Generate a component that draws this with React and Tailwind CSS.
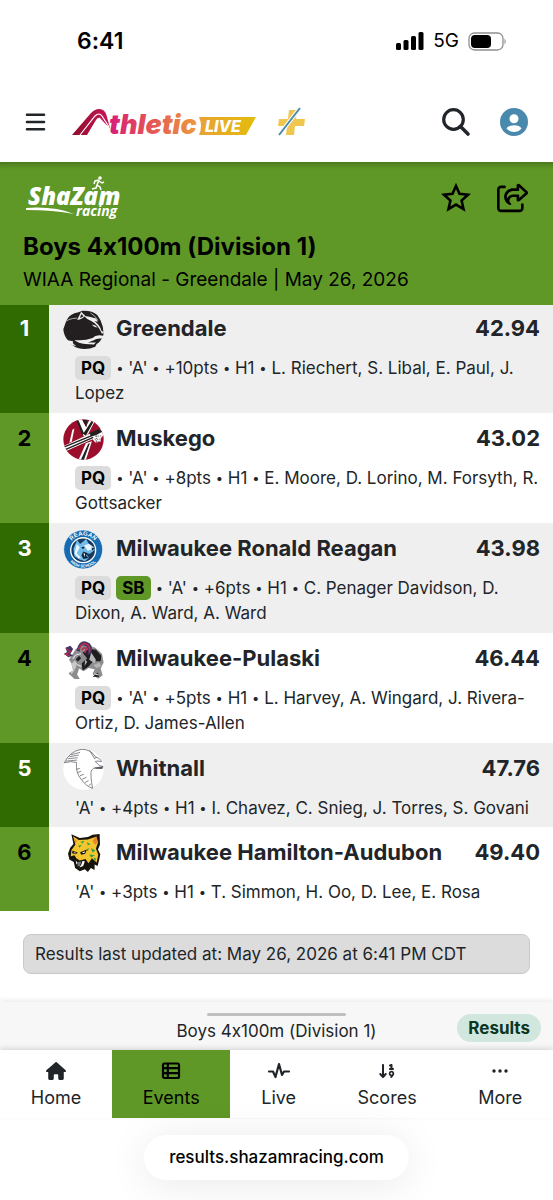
import React from "react";
import { FaArrowDown19, FaHouse, FaRegShareFromSquare } from "react-icons/fa6";

const results = [
  { place: 1, team: "Greendale", time: "42.94", badges: ["PQ"], points: 10, runners: "L. Riechert, S. Libal, E. Paul, J. Lopez" },
  { place: 2, team: "Muskego", time: "43.02", badges: ["PQ"], points: 8, runners: "E. Moore, D. Lorino, M. Forsyth, R. Gottsacker" },
  { place: 3, team: "Milwaukee Ronald Reagan", time: "43.98", badges: ["PQ", "SB"], points: 6, runners: "C. Penager Davidson, D. Dixon, A. Ward, A. Ward" },
  { place: 4, team: "Milwaukee-Pulaski", time: "46.44", badges: ["PQ"], points: 5, runners: "L. Harvey, A. Wingard, J. Rivera-Ortiz, D. James-Allen" },
  { place: 5, team: "Whitnall", time: "47.76", badges: [], points: 4, runners: "I. Chavez, C. Snieg, J. Torres, S. Govani" },
  { place: 6, team: "Milwaukee Hamilton-Audubon", time: "49.40", badges: [], points: 3, runners: "T. Simmon, H. Oo, D. Lee, E. Rosa" },
];

const Panther = () => (
  <svg viewBox="0 0 122 122" className="size-[41px]">
    <path d="M10 34 Q20 14 46 10 L58 5 Q88 4 102 18 L112 34 Q122 56 120 78 Q112 98 100 104 L96 112 Q70 124 44 116 Q28 112 14 92 Q2 78 1 60 Z" fill="#231f20" />
    <path d="M42 33 L54 8 L66 20 Q58 30 42 33 Z" fill="#efefef" />
    <path d="M50 27 L55 15 L61 22 Z" fill="#231f20" />
    <path d="M62 20 Q84 24 98 28 L104 38 L94 36 Q112 52 114 64 L122 70 L116 74 Q104 46 84 36 Q72 32 62 20 Z" fill="#efefef" />
    <path d="M82 12 Q96 20 104 34" fill="none" stroke="#efefef" strokeWidth="2" />
    <path d="M3 42 Q14 28 42 27" fill="none" stroke="#efefef" strokeWidth="2" />
    <path d="M86 46 Q98 47 103 55 Q92 55 86 46 Z" fill="#efefef" />
    <path d="M34 92 Q62 96 88 86 Q98 74 122 80 L116 88 Q100 86 90 94 L74 100 L98 100 L92 106 L66 104 Q46 102 34 92 Z" fill="#efefef" />
    <path d="M10 92 L30 96 Q26 102 40 111 Q20 108 10 92 Z" fill="#efefef" />
  </svg>
);

const Warrior = () => (
  <svg viewBox="0 0 122 122" className="size-[41px]">
    <clipPath id="warrior-clip">
      <circle cx="61" cy="61" r="60" />
    </clipPath>
    <g clipPath="url(#warrior-clip)">
      <rect width="122" height="122" fill="#9b0f2c" />
      <path d="M42 0 L56 0 L68 24 L80 0 L96 4 L74 46 L62 52 Z" fill="#fff" />
      <path d="M58 3 L72 3 L70 24 Z M85 6 L91 8 L68 50 L60 44 Z M40 4 L46 4 L62 42 L57 48 Z" fill="#231f20" />
      <path d="M28 32 L34 28 L26 68 L19 71 Z" fill="#fff" />
      <path d="M68 72 L86 66 L68 122 H46 Z" fill="#fff" />
      <path d="M75 74 L80 72 L62 122 H53 Z" fill="#231f20" />
      <path d="M2 80 L88 40 L118 28 L122 46 L112 58 L112 68 L96 70 L88 60 L8 96 Z" fill="#fff" />
      <path d="M4 83 L91 47 M7 91 L90 55" stroke="#231f20" strokeWidth="4" />
      <path d="M80 42 L108 29 L117 38 L98 48 L82 52 Z" fill="#231f20" />
      <path d="M96 52 L116 50 M94 60 L110 60 M98 67 L110 67 M101 49 L98 68" stroke="#333" strokeWidth="2" strokeDasharray="4 3" />
    </g>
  </svg>
);

const Husky = () => (
  <svg viewBox="0 0 122 122" className="size-[41px]">
    <circle cx="60" cy="61" r="58" fill="#176bb0" stroke="#fff" strokeWidth="2" />
    <circle cx="60" cy="63" r="39" fill="#fff" />
    <circle cx="60" cy="63" r="35" fill="#17395f" />
    <path id="reagan-top" d="M18 48 A45 45 0 0 1 102 48" fill="none" />
    <path id="reagan-bottom" d="M13 86 A53 53 0 0 0 107 86" fill="none" />
    <text fontFamily="Liberation Sans" fontWeight="700" fontSize="18" fill="#fff">
      <textPath href="#reagan-top" startOffset="50%" textAnchor="middle">REAGAN</textPath>
    </text>
    <text fontFamily="Liberation Sans" fontWeight="700" fontSize="12" fill="#fff">
      <textPath href="#reagan-bottom" startOffset="50%" textAnchor="middle">HIGH SCHOOL</textPath>
    </text>
    <path d="M31 59 L42 33 L51 45 L69 30 L76 43 L90 52 L95 62 L81 73 L69 74 L77 86 L65 96 L49 91 L34 81 Z" fill="#71bce8" />
    <path d="M41 45 L50 54 L41 72 L53 85 L47 88 L34 74 Z M62 49 L77 44 L92 58 L74 65 Z" fill="#e9f4fb" />
    <path d="M54 54 L65 53 L60 60 Z M85 55 L94 58 L87 64 Z M60 67 L74 72 L68 79 L76 86 L61 89 L55 79 Z" fill="#10233c" />
    <path d="M61 70 L66 75 L63 83 Z" fill="#fff" />
  </svg>
);

const Ram = () => (
  <svg viewBox="0 0 122 122" className="size-[41px]">
    <path d="M18 62 L38 30 L66 16 L96 26 L116 44 L121 70 L112 88 L118 108 L104 118 L88 104 L94 90 L76 86 L62 96 L48 88 L42 106 L50 119 L34 119 L16 102 L30 94 L26 74 Z" fill="#8d8d8f" />
    <path d="M58 40 L78 30 L98 32 L114 50 L112 66 L90 66 L76 82 L58 94 L56 72 L72 58 Z" fill="#1d1d20" />
    <path d="M84 40 L98 62 L94 72 L78 62 Z M90 78 L108 70 L114 80 L100 86 Z M66 62 L72 68 L64 80 Z" fill="#b5b5b7" />
    <path d="M24 76 L34 64 L42 72 L36 90 L26 104 L22 101 L32 90 Z" fill="#c9c9ca" />
    <path d="M40 34 Q48 2 70 8 Q92 14 84 44 L72 48 Q78 26 66 20 Q50 16 50 38 Z" fill="#443467" />
    <path d="M47 31 Q55 11 68 14 Q82 20 79 40 M56 34 Q61 23 70 28 L65 42" fill="none" stroke="#b62f4c" strokeWidth="5" />
    <path d="M7 26 L22 20 L30 30 L22 45 L31 49 L16 54 L3 44 L12 39 Z" fill="#443467" />
    <path d="M10 29 L22 38 L8 46 L20 50" fill="none" stroke="#b62f4c" strokeWidth="4" />
    <path d="M38 60 L48 50 L54 57 L44 68 Z M18 106 L34 104 M88 112 L104 100 L107 113 Z" fill="#222" />
    <path d="M39 47 L54 44 M42 76 L54 82 M29 59 L38 47 M93 103 L105 107" stroke="#e4e4e4" strokeWidth="3" />
  </svg>
);

const Falcon = () => (
  <svg viewBox="0 0 122 122" className="size-[41px]">
    <circle cx="61" cy="61" r="60" fill="#fff" />
    <g fill="none" stroke="#4e4e58" strokeWidth="2" strokeLinejoin="round">
      <path d="M4 41 Q20 7 54 1 Q83 0 97 24 Q112 28 114 38 Q103 34 96 37 L108 49 L119 52 L117 58 L103 58 Q89 54 84 66 Q81 78 88 117 Q70 112 53 89 Q38 72 40 40 Q23 35 4 41 Z" />
      <path d="M24 17 L51 10 M19 23 L47 18 M14 29 L44 26 M9 36 L42 33 M40 60 L50 58 M44 70 L54 66 M50 80 L62 75 M57 90 L70 84 M66 100 L76 94 M77 109 L83 104 M79 4 L94 29 L100 24" />
    </g>
    <path d="M86 50 L94 55 L119 51 L116 59 L98 59 Z" fill="#5a5a63" />
  </svg>
);

const Wildcat = () => (
  <svg viewBox="0 0 122 122" className="size-[41px]">
    <path d="M25 4 L50 15 L74 12 L88 5 L109 3 L110 35 L104 49 L111 63 L108 78 L103 98 L94 94 L94 110 L83 104 L74 116 L65 108 L50 114 L36 104 L32 86 L19 79 L15 62 L21 45 L31 33 Z" fill="#17130d" />
    <path d="M30 10 L47 21 L74 19 L98 11 L104 29 L98 46 L105 65 L100 88 L86 75 L76 90 L67 77 L50 82 L35 72 L23 69 L25 51 L37 34 Z" fill="#f3c52e" />
    <path d="M99 9 L105 28 L95 35 L88 23 Z M33 15 L41 23 L37 31 Z" fill="#e88729" />
    <path d="M52 26 L64 24 L58 31 Z M72 27 L82 34 L73 36 Z M45 38 L56 35 L49 44 Z M83 45 L96 52 L88 58 Z M78 64 L95 66 L84 73 Z M70 49 L77 45 L74 55 Z M91 74 L98 75 L96 86 Z" fill="#2e9d43" />
    <path d="M28 53 L44 58 L38 63 L27 60 Z M51 57 L71 49 L66 62 L54 65 Z M24 69 L34 66 L39 74 L28 77 Z" fill="#17130d" />
    <path d="M31 57 L39 59 L36 62 Z M56 58 L66 54 L63 60 Z M38 82 L44 89 L40 94 Z M58 83 L65 84 L60 98 L49 103 L55 93 Z" fill="#fff" />
    <path d="M44 86 L55 85 L50 98 L43 100 Z" fill="#777" />
  </svg>
);

const logos = { 1: Panther, 2: Warrior, 3: Husky, 4: Ram, 5: Falcon, 6: Wildcat };

const StatusBar = () => (
  <div className="flex h-[82px] items-center justify-between pl-[77px] pr-[46px] text-black">
    <span className="text-[23px] font-semibold">6:41</span>
    <div className="flex items-center gap-[9px]">
      <svg viewBox="0 0 28 18" className="h-[18px] w-7">
        <rect x="0" y="11" width="5" height="7" rx="1.5" />
        <rect x="7.5" y="8" width="5" height="10" rx="1.5" />
        <rect x="15" y="4" width="5" height="14" rx="1.5" />
        <rect x="22.5" y="0" width="5" height="18" rx="1.5" />
      </svg>
      <span className="text-[19px]">5G</span>
      <svg viewBox="0 0 39 19" className="h-[19px] w-[39px]">
        <rect x="1" y="1" width="34" height="17" rx="5.5" fill="none" stroke="#8e8e8e" strokeWidth="1.3" />
        <rect x="3" y="3" width="20" height="13" rx="4" />
        <path d="M36.5 6.5 Q39 9.5 36.5 12.5 Z" fill="#8e8e8e" />
      </svg>
    </div>
  </div>
);

const AthleticLogo = () => (
  <svg viewBox="0 -5 184 38" className="h-[38px] w-[184px]" role="img" aria-label="AthleticLIVE">
    <defs>
      <linearGradient id="word" gradientUnits="userSpaceOnUse" x1="36" x2="128" y1="0" y2="0">
        <stop offset="0" stopColor="#d81b78" />
        <stop offset="0.5" stopColor="#e35a55" />
        <stop offset="1" stopColor="#ee9f3a" />
      </linearGradient>
      <linearGradient id="flag" x1="0" x2="1" y1="0" y2="0">
        <stop offset="0" stopColor="#e9a233" />
        <stop offset="1" stopColor="#e3bd0c" />
      </linearGradient>
      <linearGradient id="track" x1="0" x2="1" y1="0" y2="0">
        <stop offset="0" stopColor="#8e0e2c" />
        <stop offset="1" stopColor="#cc1559" />
      </linearGradient>
    </defs>
    <path d="M0 27 L19 5 Q25 -1 31 2 Q34 4 35 9 L38 20 Q33 16 28 10 Q26 9 24 12 L15 27 Z" fill="url(#track)" />
    <path d="M8 27 L23 8 Q27 4 30 8 L37 19" fill="none" stroke="#fff" strokeWidth="1.2" />
    <text x="37" y="26" fontFamily="Inter" fontStyle="italic" fontWeight="900" fontSize="27" fill="url(#word)">thletic</text>
    <path d="M127 9 H184 L174 27 H127 Q131 18 127 9 Z" fill="url(#flag)" />
    <text x="133" y="24" fontFamily="Inter" fontStyle="italic" fontWeight="800" fontSize="16" fill="#fff">LIVE</text>
  </svg>
);

const Navbar = () => (
  <header className="flex h-20 items-center pl-[25px] pr-6 text-[#212529]">
    <button aria-label="Menu">
      <svg viewBox="0 0 21 18" className="h-[18px] w-[21px]" stroke="currentColor" strokeWidth="2.6" strokeLinecap="round">
        <path d="M2 1.7 H19 M2 9 H19 M2 16.3 H19" />
      </svg>
    </button>
    <a href="#" className="ml-[26px]">
      <AthleticLogo />
    </a>
    <svg viewBox="0 0 28 30" className="ml-[21px] h-[30px] w-7">
      <path d="M12 3 H20 L19 12 H28 L27 19 H18 L17 28 H9 L10 19 H1 L2 12 H11 Z" fill="#f0c64e" />
      <path d="M2 28 L23 1" stroke="#fff" strokeWidth="4" />
      <path d="M2 28 L23 1" stroke="#4a8aab" strokeWidth="2" />
    </svg>
    <button aria-label="Search" className="ml-auto">
      <svg viewBox="0 0 30 30" className="size-[30px]" fill="none" stroke="currentColor">
        <circle cx="12.5" cy="12.5" r="9.8" strokeWidth="3.2" />
        <path d="M19.5 19.5 L27 27" strokeWidth="3.6" strokeLinecap="round" />
      </svg>
    </button>
    <button aria-label="Account" className="ml-7">
      <svg viewBox="0 0 30 30" className="size-[30px]">
        <circle cx="15" cy="15" r="14" fill="#4a89ae" />
        <circle cx="15" cy="11.8" r="4.5" fill="#fff" />
        <path d="M7.5 21.5 Q9.5 18.2 15 18.2 Q20.5 18.2 22.5 21.5 Q19.5 25 15 25 Q10.5 25 7.5 21.5 Z" fill="#fff" />
      </svg>
    </button>
  </header>
);

const ShazamLogo = () => (
  <svg viewBox="0 -2 104 46" className="h-[46px] w-[104px]" fill="#fff" role="img" aria-label="ShaZam racing">
    <text x="2" y="28" fontFamily="Open Sans" fontStyle="italic" fontWeight="800" fontSize="24">ShaZam</text>
    <text x="50" y="39" fontFamily="Open Sans" fontStyle="italic" fontWeight="700" fontSize="14">racing</text>
    <path d="M0 31 Q28 29 48 37 Q28 33 0 33 Z" />
    <circle cx="74" cy="1" r="1.8" />
    <path d="M73 3 L71 8 L74 10 L75 13 M71 8 L70 11 L66 12 M73 3 L69 4 L68 7 M73 4 L76 6 L78 5" fill="none" stroke="#fff" strokeWidth="1.5" />
  </svg>
);

const EventHeader = () => (
  <section className="bg-[#5f9826] px-[23px] pb-[10px] pt-[15px] text-black shadow-[inset_0_8px_6px_-6px_rgba(0,0,0,0.3)]">
    <div className="flex h-[42px] items-center justify-between pl-[3px]">
      <ShazamLogo />
      <div className="flex items-center gap-[26px] pr-[1px]">
        <button aria-label="Favorite">
          <svg viewBox="0 0 30 30" className="size-[30px]" fill="none" stroke="currentColor" strokeWidth="2.6">
            <path d="M15 3 L18.5 10.9 L27 11.8 L20.6 17.5 L22.5 26 L15 21.6 L7.5 26 L9.4 17.5 L3 11.8 L11.5 10.9 Z" />
          </svg>
        </button>
        <button aria-label="Share">
          <FaRegShareFromSquare className="size-8" />
        </button>
      </div>
    </div>
    <h1 className="mt-[10px] text-2xl font-bold leading-[36px]">Boys 4x100m (Division 1)</h1>
    <p className="text-[19px] leading-[30px]">WIAA Regional - Greendale | May 26, 2026</p>
  </section>
);

const Badge = ({ label }) => (
  <span
    className={`mr-[5px] inline-block rounded-[5px] px-[6px] font-bold leading-6 text-black ${
      label === "SB" ? "bg-[#5f9826]" : "bg-[#dcdcdc]"
    }`}
  >
    {label}
  </span>
);

const Dot = () => <span className="align-[1px] text-[13px] leading-none">•</span>;

const ResultRow = ({ result }) => {
  const { place, team, time, badges, points, runners } = result;
  const Logo = logos[place];
  const odd = place % 2 === 1;
  const bg = odd ? "bg-[#efefef]" : "bg-white";
  const top = place === 1 ? "pt-1" : "pt-[6px]";

  return (
    <tbody className={bg}>
      <tr className="align-top text-[22px] font-bold leading-[38px]">
        <th
          rowSpan={2}
          scope="rowgroup"
          className={`w-[49px] ${top} ${odd ? "bg-[#2f6b00] text-white" : "bg-[#5f9826] text-black"}`}
        >
          {place}
        </th>
        <td className={`pl-[14px] ${top}`}>
          <div className="flex h-[47px] gap-3">
            <Logo />
            <span>{team}</span>
          </div>
        </td>
        <td className={`pr-[13px] text-right ${top}`}>{time}</td>
      </tr>
      <tr>
        <td colSpan={2} className={`pl-[26px] pr-2 text-[17px] leading-[25px] ${badges.length ? "pb-[7px]" : "pb-[6px]"}`}>
          {badges.map((b) => (
            <Badge key={b} label={b} />
          ))}
          {badges.length > 0 && (
            <>
              <Dot />{" "}
            </>
          )}
          'A' <Dot /> {`+${points}pts`} <Dot /> H1 <Dot /> {runners}
        </td>
      </tr>
    </tbody>
  );
};

const tabs = [
  { name: "Home", icon: <FaHouse className="size-5" /> },
  {
    name: "Events",
    active: true,
    icon: (
      <svg viewBox="0 0 20 18" className="h-[18px] w-5" fill="none" stroke="currentColor" strokeWidth="2.2">
        <rect x="2" y="1.5" width="16" height="14.5" rx="1.5" />
        <path d="M2 6.2 H18 M2 11.2 H18 M6.8 1.5 V16" />
      </svg>
    ),
  },
  {
    name: "Live",
    icon: (
      <svg viewBox="0 0 24 18" className="h-[18px] w-6" fill="none" stroke="currentColor" strokeWidth="2.2" strokeLinecap="round" strokeLinejoin="round">
        <path d="M2 9.5 H6 L8.5 15 L12 2 L15 13 L17 9.5 H22" />
      </svg>
    ),
  },
  { name: "Scores", icon: <FaArrowDown19 className="size-[18px]" /> },
  {
    name: "More",
    icon: (
      <svg viewBox="0 0 16 4" className="h-1 w-4" fill="currentColor">
        <circle cx="2" cy="2" r="1.7" />
        <circle cx="8" cy="2" r="1.7" />
        <circle cx="14" cy="2" r="1.7" />
      </svg>
    ),
  },
];

const TabBar = () => (
  <nav className="flex h-[68px] shadow-[0_-2px_5px_rgba(0,0,0,0.12)]">
    {tabs.map((tab) => (
      <a
        key={tab.name}
        href="#"
        className={`flex flex-auto flex-col items-center pt-[10px] text-lg leading-[26px] ${
          tab.active ? "bg-[#5f9826] text-black" : "bg-white text-[#212529]"
        }`}
      >
        <span className="flex h-[22px] items-center">{tab.icon}</span>
        <span className="mt-[3px]">{tab.name}</span>
      </a>
    ))}
  </nav>
);

const App = () => {
  return (
    <div className="flex min-h-screen flex-col bg-white font-['Inter',sans-serif] text-[#212529] [font-feature-settings:'calt'_0]">
      <StatusBar />
      <Navbar />
      <main className="grow">
        <EventHeader />
        <table className="w-full border-collapse">
          {results.map((result) => (
            <ResultRow key={result.place} result={result} />
          ))}
        </table>
        <p className="mx-[23px] mt-[23px] rounded-lg border border-[#c9c9c9] bg-[#dcdcdc] px-[11px] py-[6px] text-[17px] leading-[26px]">
          Results last updated at: May 26, 2026 at 6:41 PM CDT
        </p>
      </main>

      {/* Collapsed event drawer */}
      <div className="grid h-12 grid-cols-[1fr_auto_1fr] items-center bg-[#f7f7f7] px-3 pt-1 shadow-[0_-2px_5px_rgba(0,0,0,0.08)]">
        <div className="col-start-2 flex flex-col items-center">
          <div className="h-[3px] w-[139px] rounded-full bg-[#c0c0c0]" />
          <div className="mt-[3px] text-[17px] leading-6">Boys 4x100m (Division 1)</div>
        </div>
        <button className="justify-self-end rounded-full bg-[#d1e7dd] px-[11px] text-[17px] font-bold leading-7 text-[#0a3622]">
          Results
        </button>
      </div>
      <TabBar />

      {/* Browser address pill */}
      <div className="flex h-[82px] items-start justify-center pt-[17px]">
        <div className="rounded-full bg-white px-[25px] text-[17px] font-medium leading-[45px] text-black shadow-[0_4px_40px_rgba(0,0,0,0.09)]">
          results.shazamracing.com
        </div>
      </div>
    </div>
  );
};

export default App;
